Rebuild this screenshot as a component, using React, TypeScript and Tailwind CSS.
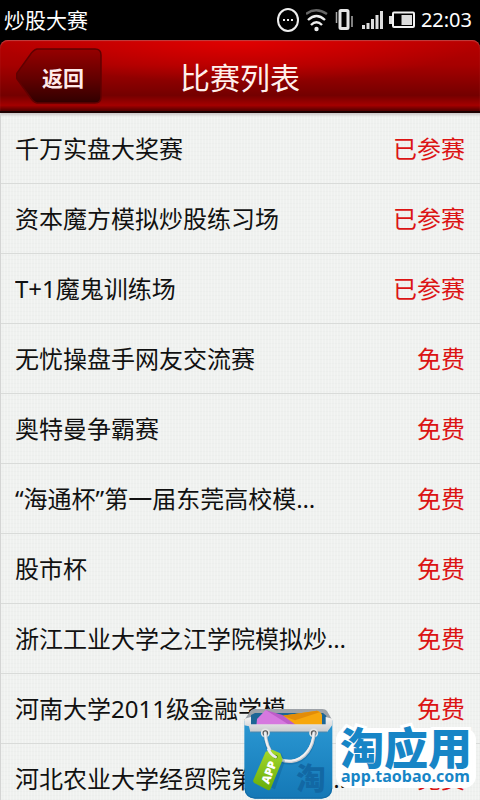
import React from 'react';

interface Contest {
  id: number;
  name: string;
  joined: boolean;
}

const CONTESTS: Contest[] = [
  { id: 1, name: '千万实盘大奖赛', joined: true },
  { id: 2, name: '资本魔方模拟炒股练习场', joined: true },
  { id: 3, name: 'T+1魔鬼训练场', joined: true },
  { id: 4, name: '无忧操盘手网友交流赛', joined: false },
  { id: 5, name: '奥特曼争霸赛', joined: false },
  { id: 6, name: '“海通杯”第一届东莞高校模…', joined: false },
  { id: 7, name: '股市杯', joined: false },
  { id: 8, name: '浙江工业大学之江学院模拟炒…', joined: false },
  { id: 9, name: '河南大学2011级金融学模…', joined: false },
  { id: 10, name: '河北农业大学经贸院第一届模…', joined: false },
];

const StatusIcons: React.FC = () => (
  <div className="flex items-center gap-1.5" aria-hidden="true">
    {/* message */}
    <svg className="h-6 w-6" viewBox="0 0 24 24" fill="none">
      <ellipse cx="12" cy="12" rx="10" ry="11" stroke="#eee" strokeWidth="2" />
      <path d="M7 11h2v2H7zM11 11h2v2h-2zM15 11h2v2h-2z" fill="#eee" />
    </svg>
    {/* wifi */}
    <svg className="h-6 w-[22px]" viewBox="0 0 22 24" fill="none" strokeWidth="2.4">
      <path d="M0 6Q10 -1.5 21 6" stroke="#666" />
      <path d="M2 12Q10.500 4 19 12" stroke="#eee" />
      <path d="M5 17Q10.500 11.500 16 17" stroke="#eee" />
      <circle cx="10.500" cy="21" r="2.200" fill="#eee" />
    </svg>
    {/* vibrate */}
    <svg className="h-6 w-[22px]" viewBox="0 0 22 24" fill="none">
      <rect x="6" y="2.500" width="8" height="18" rx="1" stroke="#e4e4e4" strokeWidth="3" />
      <path d="M2.500 4v11M18 8v11" stroke="#aaa" strokeWidth="1.500" />
    </svg>
    {/* signal */}
    <svg className="h-6 w-[21px]" viewBox="0 0 21 24" fill="#ddd">
      <path d="M0 17h3v4H0zM4.500 15h3v6h-3zM9 11h3v10H9zM13.500 7h3v14h-3zM18 3h3v18h-3z" />
    </svg>
    {/* battery */}
    <svg className="h-6 w-[26px]" viewBox="0 0 26 24" fill="none">
      <path d="M0 8h3v8H0z" fill="#ddd" />
      <rect x="4" y="4.500" width="21" height="14.500" rx="1" stroke="#f2f2f2" strokeWidth="2" />
      <path d="M12.500 7H23v10H12.500z" fill="#ddd" />
    </svg>
  </div>
);

const StatusBar: React.FC = () => (
  <div className="flex h-10 shrink-0 items-center justify-between bg-black pr-2 pl-1 text-white">
    <span className="text-[21px] leading-6">炒股大赛</span>
    <div className="flex items-center gap-1.5">
      <StatusIcons />
      <span className="text-[20px] leading-6">22:03</span>
    </div>
  </div>
);

const Header: React.FC = () => (
  <header className="bg-black">
    <div className="grid h-[73px] grid-cols-[1fr_auto_1fr] items-center rounded-t-lg border-b-2 border-[#1c0000] bg-[radial-gradient(ellipse_50%_60%_at_50%_0%,rgba(255,0,0,0.6),transparent),linear-gradient(#b80000,#a60000_35%,#740000_78%,#a40000_92%,#500000)] px-4 pt-1 shadow-[inset_0_1px_1px_#c04040]">
      <button type="button" className="-mt-1 grid h-14 w-[86px] place-items-center">
        <svg className="col-start-1 row-start-1 h-14 w-[86px]" viewBox="0 0 86 56" aria-hidden="true">
          <defs>
            <linearGradient id="back" x1="0" y1="0" x2="0" y2="1">
              <stop offset="0" stopColor="#960000" />
              <stop offset="0.550" stopColor="#620000" />
              <stop offset="1" stopColor="#300000" />
            </linearGradient>
          </defs>
          <path
            d="M21 1H79Q85 1 85 7V49Q85 55 79 55H21Q17 54 14 49L1 31Q0 28 1 25L14 7Q17 2 21 1Z"
            fill="url(#back)"
            stroke="#600000"
            strokeWidth="1.500"
          />
        </svg>
        <span className="z-10 col-start-1 row-start-1 pt-1 pl-2 text-[21px] leading-7 font-bold text-[#ffeaea]">返回</span>
      </button>
      <h1 className="text-[30px] leading-10 text-[#fff0ec]">比赛列表</h1>
    </div>
  </header>
);

const ContestRow: React.FC<{ contest: Contest }> = ({ contest }) => (
  <li className="border-b border-[#d9dbd9]">
    <button type="button" className="flex h-[69px] w-full items-center justify-between pr-[15px] pl-3.5 text-left text-[24px] leading-8">
      <span className="truncate text-[#111]">{contest.name}</span>
      <span className="shrink-0 text-[#dc1414]">{contest.joined ? '已参赛' : '免费'}</span>
    </button>
  </li>
);

const ShoppingBag: React.FC = () => (
  <svg className="h-[92px] w-[90px] shrink-0" viewBox="27 21 270 276" aria-hidden="true">
    <defs>
      <linearGradient id="bag" x1="0" y1="0" x2="0" y2="1">
        <stop offset="0" stopColor="#2b98d3" />
        <stop offset="1" stopColor="#1478b6" />
      </linearGradient>
      <linearGradient id="rim" x1="0" y1="0" x2="0" y2="1">
        <stop offset="0" stopColor="#f4f4f4" />
        <stop offset="1" stopColor="#c8c9cc" />
      </linearGradient>
      <linearGradient id="tag" x1="0" y1="0" x2="0" y2="1">
        <stop offset="0" stopColor="#a5d82c" />
        <stop offset="1" stopColor="#67ad08" />
      </linearGradient>
    </defs>
    {/* back of the bag */}
    <path d="M46 30Q50 24 60 24H262Q272 24 276 30L290 54V90H30V54Z" fill="#9da2a8" />
    <path d="M48 42L60 36H264L274 44V78H46Z" fill="#1d6595" />
    {/* goods inside */}
    <path d="M142 44L246 29Q258 31 261 42V76H150Z" fill="#f7a70c" />
    <path d="M142 44L246 29L254 34L180 58Z" fill="#e38c08" />
    <path d="M66 54L92 27L190 76H64Z" fill="#d678df" />
    <path d="M92 27L142 42L186 74L160 70Z" fill="#bd5dc8" />
    {/* front */}
    <path d="M28 58L48 73H272L292 58V262Q290 292 260 293H60Q30 292 28 262Z" fill="url(#bag)" />
    <path d="M30 262Q32 289 60 291H260Q288 289 290 262" fill="none" stroke="#126ba4" strokeWidth="3" />
    <path d="M28 53L48 48V70H272V48L292 53V72L276 94H46L42 76L28 73Z" fill="url(#rim)" />
    <path d="M46 93H276" stroke="#0f689f" strokeWidth="2" />
    <text x="184" y="265" fontSize="88" fontWeight="900" fill="#1268a4" fontFamily="Noto Sans CJK SC, sans-serif">淘</text>
    {/* rings and handle */}
    <circle cx="91" cy="96" r="11" fill="#555" stroke="#e6e6e6" strokeWidth="5" />
    <circle cx="236" cy="96" r="11" fill="#555" stroke="#e6e6e6" strokeWidth="5" />
    <path d="M91 98C94 154 126 188 170 184C211 180 235 140 237 98" fill="none" stroke="#0d5f96" strokeOpacity="0.400" strokeWidth="13" />
    <path d="M91 96C94 152 126 185 170 181C211 177 235 137 237 96" fill="none" stroke="#c4c7cc" strokeWidth="10" strokeLinecap="round" />
    <path d="M90 96C93 151 126 183 169 179C209 175 233 137 236 96" fill="none" stroke="#f0f1f3" strokeWidth="6" strokeLinecap="round" />
    {/* price tag */}
    <path d="M60 238L120 265L150 180L138 155Z" fill="#0b4f80" opacity="0.300" />
    <path d="M92 152L112 146L136 157L143 176L107 263Q104 269 98 267L58 246Q53 243 55 237Z" fill="url(#tag)" />
    <circle cx="122" cy="167" r="6" fill="#467f10" />
    <path d="M100 145C106 157 113 164 122 168" fill="none" stroke="#e9ebed" strokeWidth="8" strokeLinecap="round" />
    <text x="0" y="0" fontSize="35" fontWeight="900" fill="#fff" fontFamily="Noto Sans, sans-serif" transform="translate(101 251) rotate(-69)">APP</text>
  </svg>
);

// store badge that floats over the bottom right corner
const StoreBadge: React.FC = () => (
  <div className="pointer-events-none absolute right-0 bottom-0 flex w-[236px] items-start gap-0.5">
    <ShoppingBag />
    <div className="mt-5 rounded-xl bg-white px-1 pb-1 font-bold text-[#1785c6]">
      <p className="text-[44px] leading-10 font-black whitespace-nowrap [-webkit-text-stroke:6px_#fff] [paint-order:stroke_fill] [stroke-linejoin:round]">淘应用</p>
      <p className="pl-px text-[16px] leading-4 whitespace-nowrap">app.taobao.com</p>
    </div>
  </div>
);

export default function App() {
  return (
    <div className="relative flex h-screen flex-col overflow-hidden bg-[#eff1ef] font-['Noto_Sans','Noto_Sans_CJK_SC',sans-serif]">
      <StatusBar />
      <Header />
      <main className="min-h-0 flex-1 overflow-y-auto border-l border-[#d4d5d4] bg-[repeating-linear-gradient(90deg,rgba(255,255,255,0.25)_0_1px,transparent_1px_3px),repeating-linear-gradient(0deg,rgba(228,231,229,0.3)_0_1px,transparent_1px_4px)] shadow-[inset_0_4px_3px_-2px_#c9c5c5] [scrollbar-width:none]">
        <ul className="pt-px">
          {CONTESTS.map((c) => (
            <ContestRow key={c.id} contest={c} />
          ))}
        </ul>
      </main>
      <StoreBadge />
    </div>
  );
}
